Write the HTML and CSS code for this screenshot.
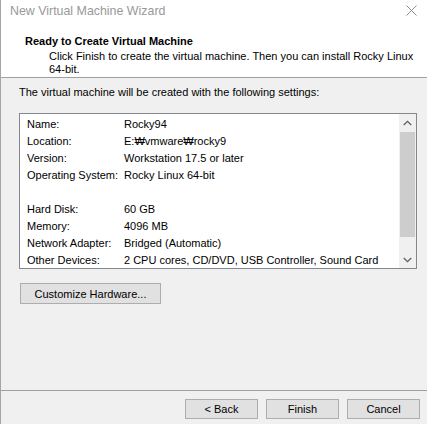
FILE: index.html
```html
<!DOCTYPE html>
<html>
<head>
<meta charset="utf-8">
<link rel="stylesheet" href="styles.css">
</head>
<body>
<div class="window">
  <div class="top">
    <div class="titlebar">
      <span class="title">New Virtual Machine Wizard</span>
      <svg class="close" width="11" height="11" viewBox="0 0 11 11"><path d="M0.5 0.5 L10.5 10.5 M10.5 0.5 L0.5 10.5" stroke="#8c8c8c" stroke-width="1" fill="none"/></svg>
    </div>
    <div class="header">
      <div class="h-title">Ready to Create Virtual Machine</div>
      <div class="h-desc">Click Finish to create the virtual machine. Then you can install Rocky Linux<br>64-bit.</div>
    </div>
  </div>
  <div class="body">
    <div class="intro">The virtual machine will be created with the following settings:</div>
    <div class="listbox">
      <div class="rows">
        <div class="row"><span class="k">Name:</span><span class="v">Rocky94</span></div>
        <div class="row"><span class="k">Location:</span><span class="v">E:₩vmware₩rocky9</span></div>
        <div class="row"><span class="k">Version:</span><span class="v">Workstation 17.5 or later</span></div>
        <div class="row"><span class="k">Operating System:</span><span class="v">Rocky Linux 64-bit</span></div>
        <div class="row"></div>
        <div class="row"><span class="k">Hard Disk:</span><span class="v">60 GB</span></div>
        <div class="row"><span class="k">Memory:</span><span class="v">4096 MB</span></div>
        <div class="row"><span class="k">Network Adapter:</span><span class="v">Bridged (Automatic)</span></div>
        <div class="row"><span class="k">Other Devices:</span><span class="v">2 CPU cores, CD/DVD, USB Controller, Sound Card</span></div>
      </div>
      <div class="scrollbar">
        <div class="arrow"><svg width="9" height="6" viewBox="0 0 9 6"><path d="M0.8 5 L4.5 1.3 L8.2 5" stroke="#606060" stroke-width="1.3" fill="none"/></svg></div>
        <div class="track"><div class="thumb"></div></div>
        <div class="arrow"><svg width="9" height="6" viewBox="0 0 9 6"><path d="M0.8 1 L4.5 4.7 L8.2 1" stroke="#606060" stroke-width="1.3" fill="none"/></svg></div>
      </div>
    </div>
    <button class="btn customize">Customize Hardware...</button>
  </div>
  <div class="footer">
    <button class="btn">&lt; Back</button>
    <button class="btn">Finish</button>
    <button class="btn">Cancel</button>
  </div>
</div>
</body>
</html>
```
FILE: styles.css
```css
html, body {
  margin: 0;
  padding: 0;
  background: #f0f0f0;
}
.window {
  width: 427px;
  height: 424px;
  box-sizing: border-box;
  border-left: 1px solid #a6a6a6;
  background: #f0f0f0;
  display: flex;
  flex-direction: column;
  font-family: "Liberation Sans", Arial, sans-serif;
  font-size: 11px;
  color: #000;
}
.top {
  background: #fff;
  height: 77px;
  border-bottom: 1px solid #a0a0a0;
  flex: none;
}
.titlebar {
  height: 22px;
  display: flex;
  align-items: center;
  justify-content: space-between;
  padding: 0 10px 0 9px;
}
.title {
  font-size: 12.4px;
  color: #999;
  line-height: 22px;
}
.close {
  display: block;
  margin-top: -1px;
}
.header {
  padding-top: 11px;
}
.h-title {
  font-weight: bold;
  line-height: 16px;
  padding-left: 24px;
  margin-bottom: 1px;
}
.h-desc {
  line-height: 13px;
  padding-left: 48px;
}
.body {
  flex: 1;
  padding: 6px 0 0 18px;
  display: flex;
  flex-direction: column;
  align-items: flex-start;
}
.intro {
  line-height: 17px;
}
.listbox {
  margin-top: 12px;
  width: 398px;
  height: 156px;
  box-sizing: border-box;
  border: 1px solid #828790;
  background: #fff;
  display: flex;
  overflow: hidden;
}
.rows {
  flex: 1;
  padding: 2px 0 0 7px;
  overflow: hidden;
}
.row {
  height: 17px;
  line-height: 17px;
  display: flex;
  white-space: nowrap;
}
.k {
  width: 97px;
  flex: none;
}
.scrollbar {
  width: 17px;
  flex: none;
  background: #f0f0f0;
  display: flex;
  flex-direction: column;
}
.arrow {
  height: 17px;
  flex: none;
  display: flex;
  align-items: center;
  justify-content: center;
}
.arrow svg {
  display: block;
}
.track {
  flex: 1;
  padding: 1px 1px 0 1px;
}
.thumb {
  height: 105px;
  background: #cdcdcd;
}
.btn {
  font-family: "Liberation Sans", Arial, sans-serif;
  font-size: 11px;
  color: #000;
  background: #e1e1e1;
  border: 1px solid #adadad;
  border-radius: 0;
  padding: 0;
  margin: 0;
  height: 20px;
  width: 73px;
  box-sizing: border-box;
  line-height: 18px;
}
.customize {
  margin: 14px 0 0 1px;
  width: 141px;
  height: 21px;
}
.footer {
  flex: none;
  height: 34px;
  box-sizing: border-box;
  border-top: 1px solid #a0a0a0;
  display: flex;
  justify-content: flex-end;
  gap: 8px;
  padding: 8px 7px 0 0;
}
```
